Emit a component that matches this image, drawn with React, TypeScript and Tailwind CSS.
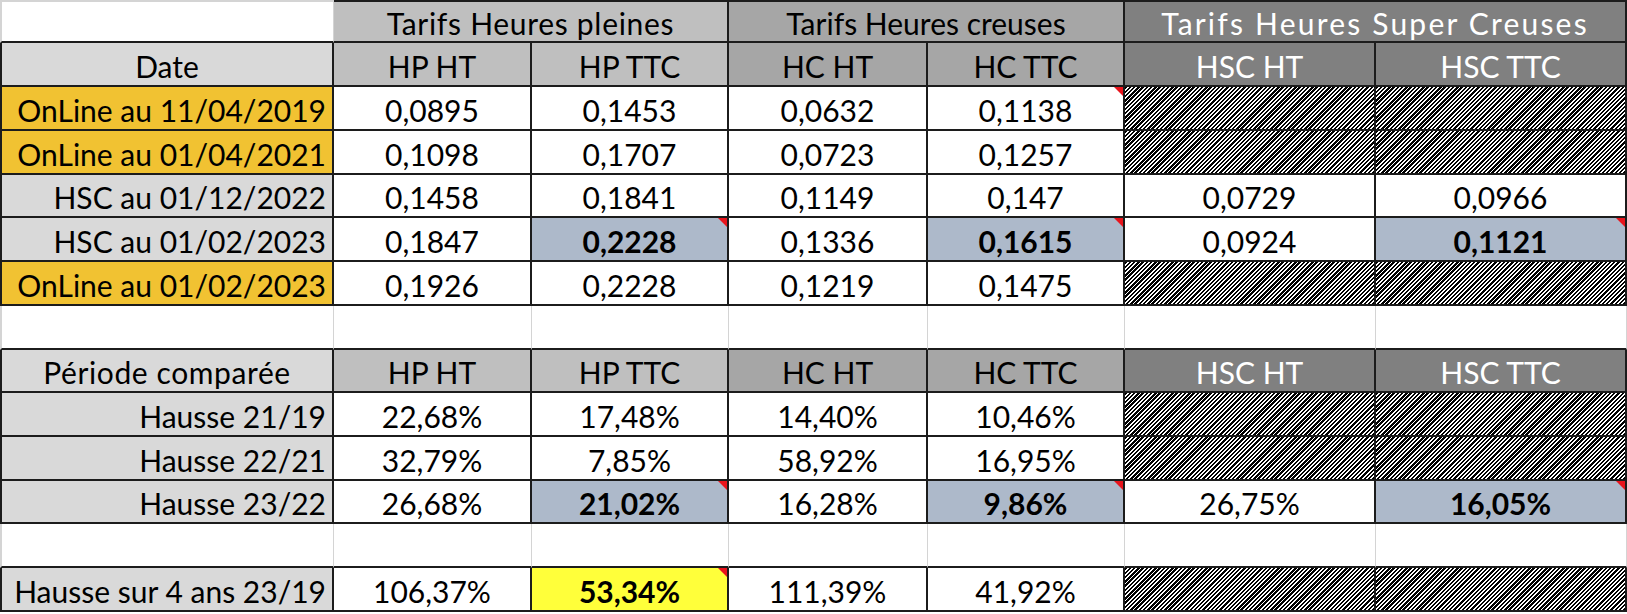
import React from 'react';

type Kind = 'white' | 'date' | 'gold' | 'hp' | 'hc' | 'hsc' | 'hl' | 'yellow' | 'hatch' | 'empty' | 'corner';

interface CellData {
  text?: string;
  kind: Kind;
  span?: number;
  align?: 'center' | 'right';
  bold?: boolean;
  note?: boolean;
  tracking?: string;
}

const bgByKind: Record<Kind, string> = {
  white: 'bg-white',
  date: 'bg-[#d9d9d9]',
  gold: 'bg-[#f1c232]',
  hp: 'bg-[#bfbfbf]',
  hc: 'bg-[#a6a6a6]',
  hsc: 'bg-[#808080] text-white',
  hl: 'bg-[#adb9ca]',
  yellow: 'bg-[#ffff3a]',
  hatch: 'bg-[repeating-linear-gradient(135deg,#000_0px,#000_1.7px,#fff_1.7px,#fff_3px)]',
  empty: 'bg-white',
  corner: 'bg-white',
};

const v = (text: string, extra: Partial<CellData> = {}): CellData => ({ text, kind: 'white', ...extra });
const hl = (text: string): CellData => ({ text, kind: 'hl', bold: true, note: true });
const hatch: CellData = { kind: 'hatch' };
const label = (text: string, kind: Kind): CellData => ({ text, kind, align: 'right' });

const subHeader = (first: string): CellData[] => [
  { text: first, kind: 'date', tracking: first === 'Date' ? '' : 'tracking-[0.6px]' },
  { text: 'HP HT', kind: 'hp' },
  { text: 'HP TTC', kind: 'hp' },
  { text: 'HC HT', kind: 'hc' },
  { text: 'HC TTC', kind: 'hc' },
  { text: 'HSC HT', kind: 'hsc' },
  { text: 'HSC TTC', kind: 'hsc' },
];

const emptyRow: CellData[] = Array.from({ length: 7 }, () => ({ kind: 'empty' as Kind }));

const rows: CellData[][] = [
  [
    { kind: 'corner' },
    { text: 'Tarifs Heures pleines', kind: 'hp', span: 2, tracking: 'tracking-[0.7px]' },
    { text: 'Tarifs Heures creuses', kind: 'hc', span: 2 },
    { text: 'Tarifs Heures Super Creuses', kind: 'hsc', span: 2, tracking: 'tracking-[2.2px]' },
  ],
  subHeader('Date'),
  [label('OnLine au 11/04/2019', 'gold'), v('0,0895'), v('0,1453'), v('0,0632'), v('0,1138', { note: true }), hatch, hatch],
  [label('OnLine au 01/04/2021', 'gold'), v('0,1098'), v('0,1707'), v('0,0723'), v('0,1257'), hatch, hatch],
  [label('HSC au 01/12/2022', 'date'), v('0,1458'), v('0,1841'), v('0,1149'), v('0,147'), v('0,0729'), v('0,0966')],
  [label('HSC au 01/02/2023', 'date'), v('0,1847'), hl('0,2228'), v('0,1336'), hl('0,1615'), v('0,0924'), hl('0,1121')],
  [label('OnLine au 01/02/2023', 'gold'), v('0,1926'), v('0,2228'), v('0,1219'), v('0,1475'), hatch, hatch],
  emptyRow,
  subHeader('Période comparée'),
  [label('Hausse 21/19', 'date'), v('22,68%'), v('17,48%'), v('14,40%'), v('10,46%'), hatch, hatch],
  [label('Hausse 22/21', 'date'), v('32,79%'), v('7,85%'), v('58,92%'), v('16,95%'), hatch, hatch],
  [label('Hausse 23/22', 'date'), v('26,68%'), hl('21,02%'), v('16,28%'), hl('9,86%'), v('26,75%'), hl('16,05%')],
  emptyRow,
  [
    label('Hausse sur 4 ans 23/19', 'date'),
    v('106,37%'),
    { text: '53,34%', kind: 'yellow', bold: true, note: true },
    v('111,39%'),
    v('41,92%'),
    hatch,
    hatch,
  ],
];

function Cell({ cell, first, top }: { cell: CellData; first: boolean; top: boolean }) {
  const light = cell.kind === 'empty' || cell.kind === 'corner';
  const spanClass = cell.span === 2 ? 'col-span-2' : '';
  const borderR = light ? 'border-r border-r-[#d4d4d4]' : 'border-r-2 border-r-[#1c1c1c]';
  const borderL = first ? (light ? 'border-l-2 border-l-[#d4d4d4]' : 'border-l-2 border-l-[#1c1c1c]') : '';
  const borderT = top ? (light ? 'border-t-2 border-t-[#d4d4d4]' : 'border-t-2 border-t-[#1c1c1c]') : '';
  const align = cell.align === 'right' ? 'justify-end pr-[6px]' : 'justify-center';

  return (
    <div
      className={`relative flex items-center ${align} ${spanClass} ${bgByKind[cell.kind]} ${borderR} ${borderL} ${borderT} border-b-2 border-b-[#1c1c1c] ${
        cell.bold ? 'font-bold' : ''
      } ${cell.tracking ?? ''} whitespace-nowrap overflow-hidden`}
    >
      {cell.text && <span className="pt-[3px]">{cell.text}</span>}
      {cell.note && (
        <svg className="absolute right-0 top-0" width="9" height="9" viewBox="0 0 9 9">
          <polygon points="0,0 9,0 9,9" fill="#e8141c" />
        </svg>
      )}
    </div>
  );
}

export default function App() {
  return (
    <div className="w-[1627px] h-[614px] bg-white overflow-hidden font-['Lato','Open_Sans',sans-serif] text-[30px] leading-none text-black">
      <div className="grid grid-cols-[334px_198px_197px_199px_197px_251px_251px] grid-rows-[43px_44px_44px_44px_43px_44px_44px_44px_43px_44px_44px_43px_44px_44px]">
        {rows.map((row, r) =>
          row.map((cell, c) => <Cell key={`${r}-${c}`} cell={cell} first={c === 0} top={r === 0} />)
        )}
      </div>
    </div>
  );
}
